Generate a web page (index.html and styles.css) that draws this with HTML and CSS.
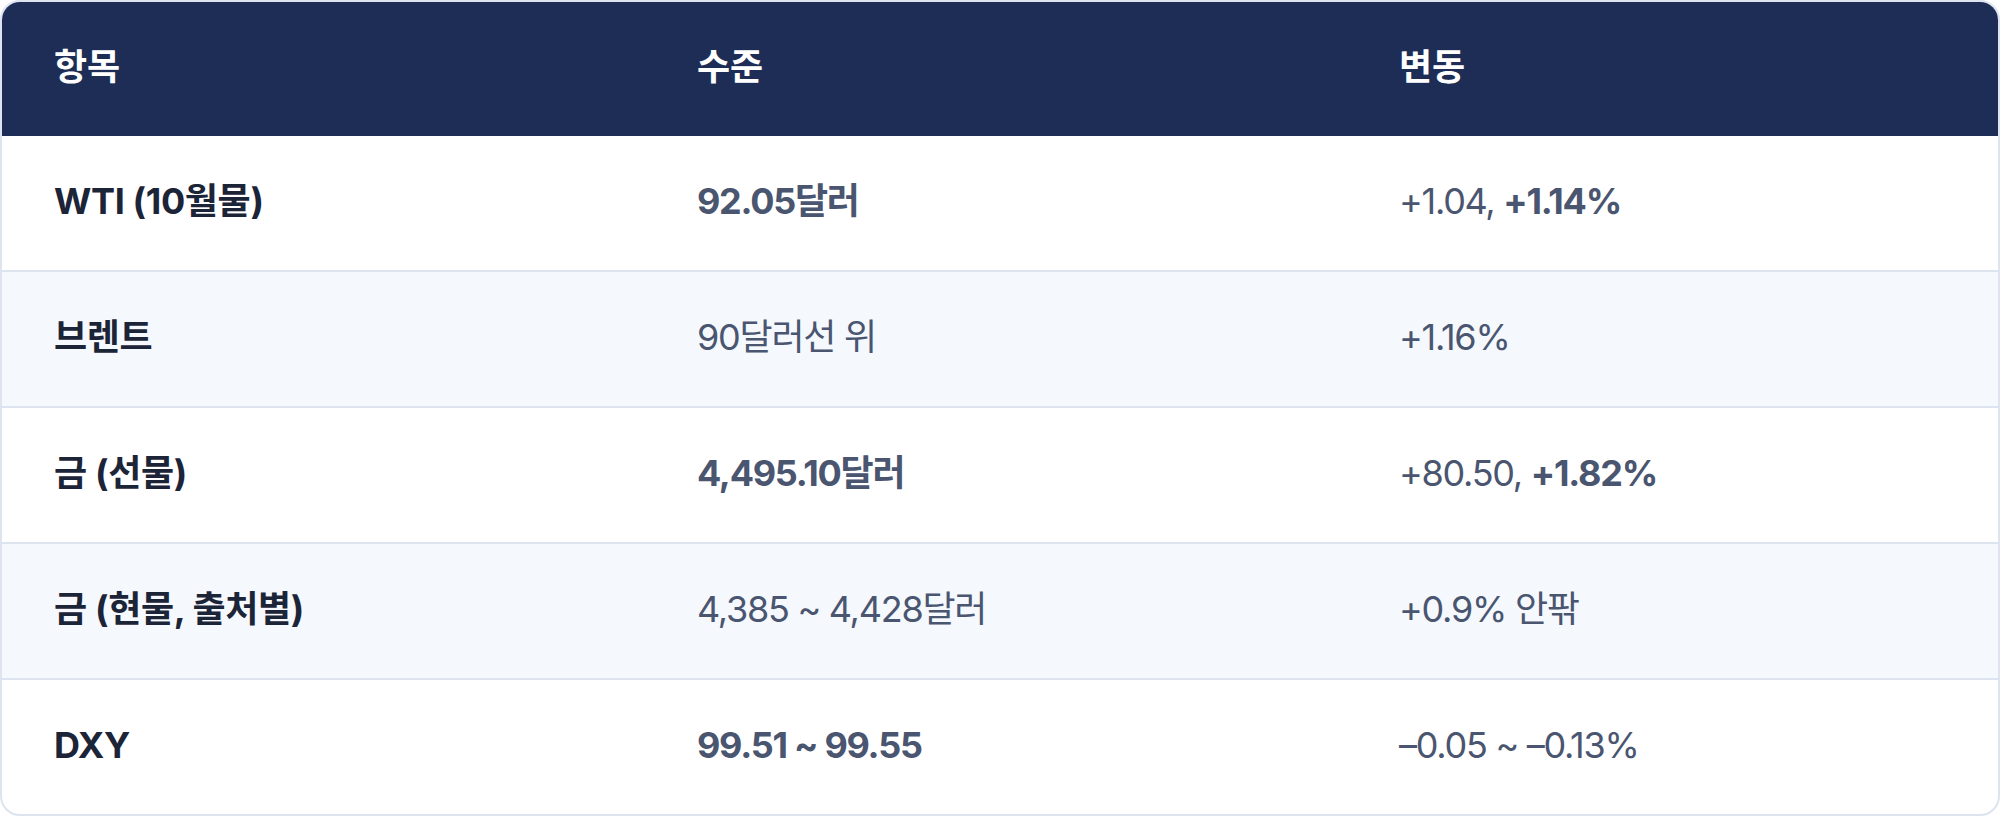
FILE: index.html
```html
<!DOCTYPE html>
<html lang="ko">
<head>
<meta charset="utf-8">
<title>시장 지표</title>
<link rel="stylesheet" href="styles.css">
</head>
<body>
<div class="card">
  <table class="tbl">
    <colgroup>
      <col class="c1"><col class="c2"><col class="c3">
    </colgroup>
    <thead>
      <tr><th>항목</th><th>수준</th><th>변동</th></tr>
    </thead>
    <tbody>
      <tr>
        <td class="label">WTI (10월물)</td>
        <td class="val"><strong>92.05달러</strong></td>
        <td class="val">+1.04, <strong>+1.14%</strong></td>
      </tr>
      <tr class="alt">
        <td class="label">브렌트</td>
        <td class="val">90달러선 위</td>
        <td class="val">+1.16%</td>
      </tr>
      <tr>
        <td class="label">금 (선물)</td>
        <td class="val"><strong>4,495.10달러</strong></td>
        <td class="val">+80.50, <strong>+1.82%</strong></td>
      </tr>
      <tr class="alt">
        <td class="label">금 (현물, 출처별)</td>
        <td class="val">4,385 ~ 4,428달러</td>
        <td class="val">+0.9% 안팎</td>
      </tr>
      <tr>
        <td class="label">DXY</td>
        <td class="val"><strong>99.51 ~ 99.55</strong></td>
        <td class="val">–0.05 ~ –0.13%</td>
      </tr>
    </tbody>
  </table>
</div>
</body>
</html>
```
FILE: styles.css
```css
html, body {
  margin: 0;
  padding: 0;
  background: #ffffff;
}
body {
  font-family: Inter, "Noto Sans CJK KR", sans-serif;
  font-size: 36px;
  line-height: 54px;
}
.card {
  width: 2000px;
  box-sizing: border-box;
  border: 2px solid #dde4ef;
  border-radius: 20px;
  overflow: hidden;
  background: #ffffff;
}
.tbl {
  width: 100%;
  border-collapse: collapse;
  table-layout: fixed;
}
.c1 { width: 643px; }
.c2 { width: 702px; }
.tbl th {
  background: #1e2d55;
  color: #ffffff;
  font-weight: 700;
  text-align: left;
  padding: 38px 52px 42px;
}
.tbl td {
  padding: 38px 52px 42px;
  border-top: 2px solid #dde4ef;
}
.tbl tbody tr:first-child td {
  border-top: none;
}
.tbl tr.alt td {
  background: #f5f8fd;
}
.label {
  color: #1c2437;
  font-weight: 700;
  letter-spacing: -0.01em;
}
.val {
  color: #4a5570;
  font-weight: 400;
  letter-spacing: -0.035em;
}
.val strong {
  font-weight: 650;
}
```
